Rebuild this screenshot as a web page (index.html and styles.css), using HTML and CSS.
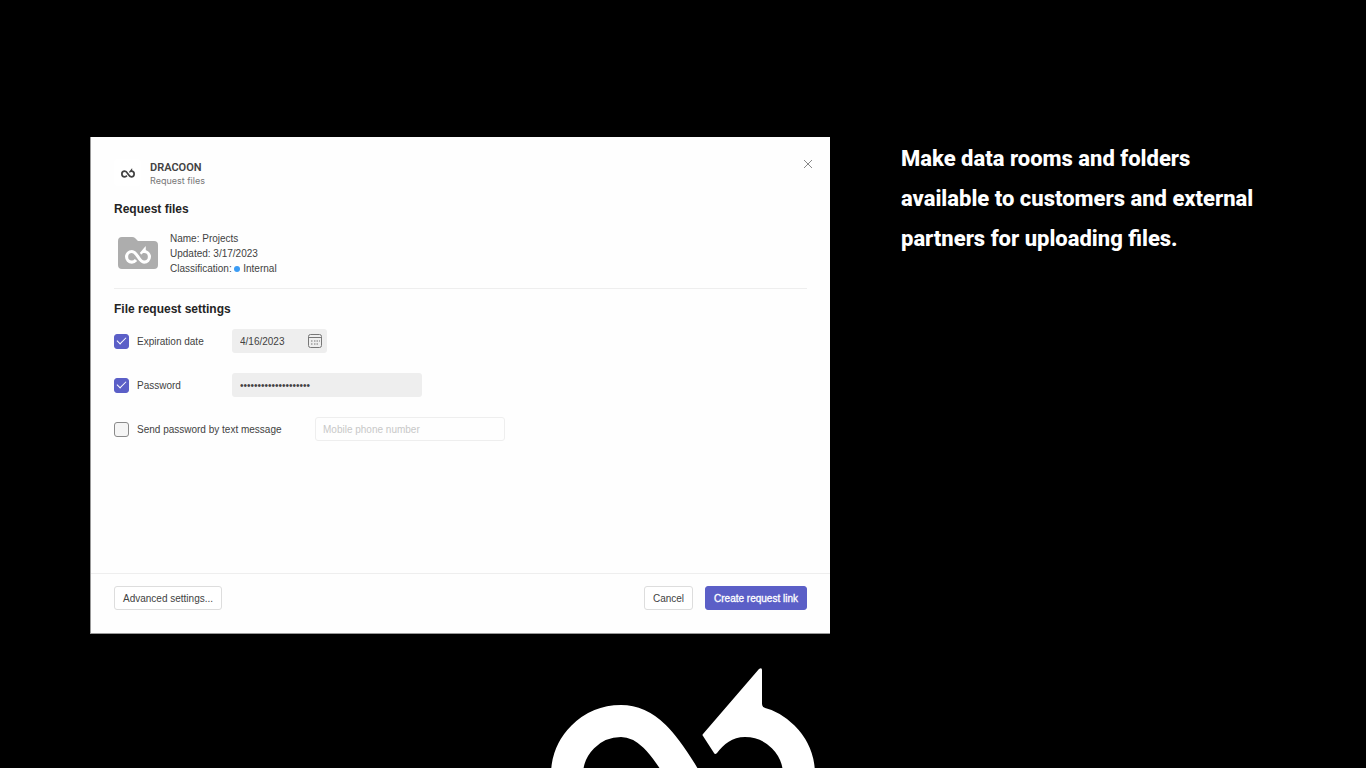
FILE: index.html
```html
<!DOCTYPE html>
<html lang="en">
<head>
    <meta charset="UTF-8">
    <meta name="viewport" content="width=device-width, initial-scale=1.0">
    <title>DRACOON - Request files</title>
    <link rel="stylesheet" href="styles.css">
</head>
<body>

    <!-- Logo shape, used in three sizes -->
    <svg class="sprite" aria-hidden="true">
        <symbol id="dracoon" viewBox="0 0 264 180">
            <path d="M112 140C98 156 86 162 70 162A54 54 0 0 1 70 54C96 54 113 77 132 108C151 139 169 162 194 162A54 54 0 0 0 194 54" fill="none" stroke="currentColor" stroke-width="32"/>
            <path d="M152 67L208 2Q211 0 211 3V37Q211 40 214 41L205 70L194 70C181 70 173 77 166 86Q164 88 163 86L152 69Q151 68 152 67Z" fill="currentColor"/>
        </symbol>
    </svg>

    <main class="slide">
        <section class="dialog">
            <header class="dialog-header">
                <div class="app-icon">
                    <svg><use href="#dracoon"/></svg>
                </div>
                <div class="app-title">
                    <h1>DRACOON</h1>
                    <p>Request files</p>
                </div>
                <button class="close" type="button" aria-label="Close">
                    <svg viewBox="0 0 10 10"><path d="M1 1L9 9M9 1L1 9"/></svg>
                </button>
            </header>

            <form class="dialog-body">
                <h2>Request files</h2>
                <div class="room">
                    <div class="folder">
                        <svg class="folder-shape" viewBox="0 0 40 32"><path d="M4 0H14Q16 0 17 1L20 4H36Q40 4 40 8V28Q40 32 36 32H4Q0 32 0 28V4Q0 0 4 0Z"/></svg>
                        <svg class="folder-logo"><use href="#dracoon"/></svg>
                    </div>
                    <ul>
                        <li>Name: Projects</li>
                        <li>Updated: 3/17/2023</li>
                        <li>Classification: <span class="dot"></span> Internal</li>
                    </ul>
                </div>

                <h2>File request settings</h2>
                <div class="field">
                    <label class="check"><input type="checkbox" checked> Expiration date</label>
                    <div class="date">
                        <input type="text" value="4/16/2023" aria-label="Expiration date">
                        <svg viewBox="0 0 14 14">
                            <rect x="0.5" y="0.5" width="13" height="13" rx="2"/>
                            <path d="M1 3.5H13"/>
                            <path d="M6 7H7.5M8.5 7H10M11 7H12M3 7H4.5M3 10H4.5M6 10H7.5M8.5 10H10"/>
                        </svg>
                    </div>
                </div>
                <div class="field">
                    <label class="check"><input type="checkbox" checked> Password</label>
                    <input class="text" type="password" value="dracoon-request-2023" aria-label="Password">
                </div>
                <div class="field field-long">
                    <label class="check"><input type="checkbox"> Send password by text message</label>
                    <input class="text" type="tel" placeholder="Mobile phone number" aria-label="Mobile phone number" disabled>
                </div>
            </form>

            <footer class="dialog-footer">
                <button class="btn advanced" type="button">Advanced settings...</button>
                <button class="btn" type="button">Cancel</button>
                <button class="btn primary" type="button">Create request link</button>
            </footer>
        </section>

        <p class="claim">Make data rooms and folders available to customers and external partners for uploading files.</p>
    </main>

    <div class="brand">
        <svg><use href="#dracoon"/></svg>
    </div>

</body>
</html>
```

FILE: styles.css
```css
* {
    box-sizing: border-box;
}
body {
    display: flex;
    flex-direction: column;
    margin: 0;
    height: 100vh;
    overflow: hidden;
    background: #000;
    color: #424242;
    font-family: "Liberation Sans", Arial, sans-serif;
    font-size: 10px;
}
h1, h2, p, ul {
    margin: 0;
    padding: 0;
}
input, button {
    font: inherit;
    color: inherit;
}
svg {
    display: block;
}
.sprite {
    display: none;
}

.slide {
    display: grid;
    grid-template-columns: 740fr 375fr;
    gap: 71px;
    padding: 137px 90px 0;
}

/* Dialog */
.dialog {
    display: flex;
    flex-direction: column;
    min-height: 497px;
    background: #fefefe;
    border-left: 1px solid #999;
    border-bottom: 1px solid #999;
}
.dialog-header {
    display: flex;
    gap: 9px;
    padding: 22px 16px 0 23px;
}
.app-icon {
    display: grid;
    place-items: center;
    width: 27px;
    height: 27px;
    border-radius: 4px;
    background: #fff;
}
.app-icon svg {
    width: 14px;
    height: 10px;
}
.app-title {
    flex: 1;
    padding-top: 1px;
}
.app-title h1 {
    font-family: Roboto, sans-serif;
    font-size: 11px;
    line-height: 15px;
    font-weight: 600;
}
.app-title p {
    font-family: Inter, sans-serif;
    font-size: 9px;
    line-height: 12px;
    color: #777;
}
.close {
    align-self: flex-start;
    padding: 0;
    border: 0;
    background: none;
}
.close svg {
    width: 12px;
    height: 10px;
    fill: none;
    stroke: #888;
}
.dialog-body {
    flex: 1;
    padding: 12px 23px;
}
h2 {
    font-size: 12px;
    line-height: 20px;
    color: #242424;
}
.room {
    display: flex;
    gap: 12px;
    margin-bottom: 10px;
    padding: 12px 0 12px 4px;
    border-bottom: 1px solid #eee;
}
.room ul {
    list-style: none;
    line-height: 15px;
}
.dot {
    display: inline-block;
    width: 6px;
    height: 6px;
    border-radius: 50%;
    background: #3b9cf5;
}
.folder {
    display: grid;
    place-items: center;
    width: 40px;
    padding-bottom: 2px;
}
.folder svg {
    grid-area: 1 / 1;
}
.folder-shape {
    width: 40px;
    height: 32px;
    fill: #adadad;
}
.folder-logo {
    width: 26px;
    height: 18px;
    margin-top: 4px;
    color: #fff;
}

/* Settings */
.field {
    display: flex;
    height: 24px;
    margin: 10px 0 20px;
}
.field + .field {
    margin-top: 0;
}
.check {
    display: flex;
    align-items: center;
    gap: 8px;
    width: 118px;
}
.field-long .check {
    width: 201px;
}
.check input {
    appearance: none;
    display: grid;
    place-items: center;
    width: 15px;
    height: 15px;
    margin: 0;
    border: 1px solid #8a8a8a;
    border-radius: 3px;
    background: #f5f5f5;
}
.check input:checked {
    border-color: #5b5fc7;
    background: #5b5fc7;
}
.check input:checked::after {
    content: "";
    width: 8px;
    height: 4px;
    margin-bottom: 3px;
    border: solid #fff;
    border-width: 0 0 1px 1px;
    transform: rotate(-45deg);
}
.text, .date {
    width: 190px;
    padding: 0 8px;
    border: 0;
    border-radius: 3px;
    background: #eee;
}
.text:disabled {
    padding: 0 7px;
    border: 1px solid #eee;
    background: none;
}
.text::placeholder {
    color: #c8c8c8;
}
.date {
    display: flex;
    align-items: center;
    justify-content: space-between;
    width: 95px;
    padding-right: 5px;
}
.date input {
    width: 60px;
    padding: 0;
    border: 0;
    background: none;
}
.date svg {
    width: 14px;
    height: 14px;
    fill: none;
    stroke: #777;
}

/* Buttons */
.dialog-footer {
    display: flex;
    gap: 12px;
    padding: 12px 23px 23px;
    border-top: 1px solid #eee;
}
.btn {
    height: 24px;
    padding: 0 8px;
    border: 1px solid #ddd;
    border-radius: 3px;
    background: #fff;
}
.advanced {
    margin-right: auto;
}
.primary {
    border-color: #5b5fc7;
    background: #5b5fc7;
    color: #fff;
    -webkit-text-stroke: 0.3px #fff;
}

.claim {
    padding-top: 2px;
    font-family: Roboto, sans-serif;
    font-size: 22px;
    line-height: 40px;
    font-weight: 800;
    color: #fff;
}
.brand {
    display: flex;
    flex: 1;
    justify-content: center;
    min-height: 0;
    padding-top: 33px;
    overflow: hidden;
    color: #fff;
}
.brand svg {
    flex: none;
    width: 264px;
    height: 180px;
}
```
